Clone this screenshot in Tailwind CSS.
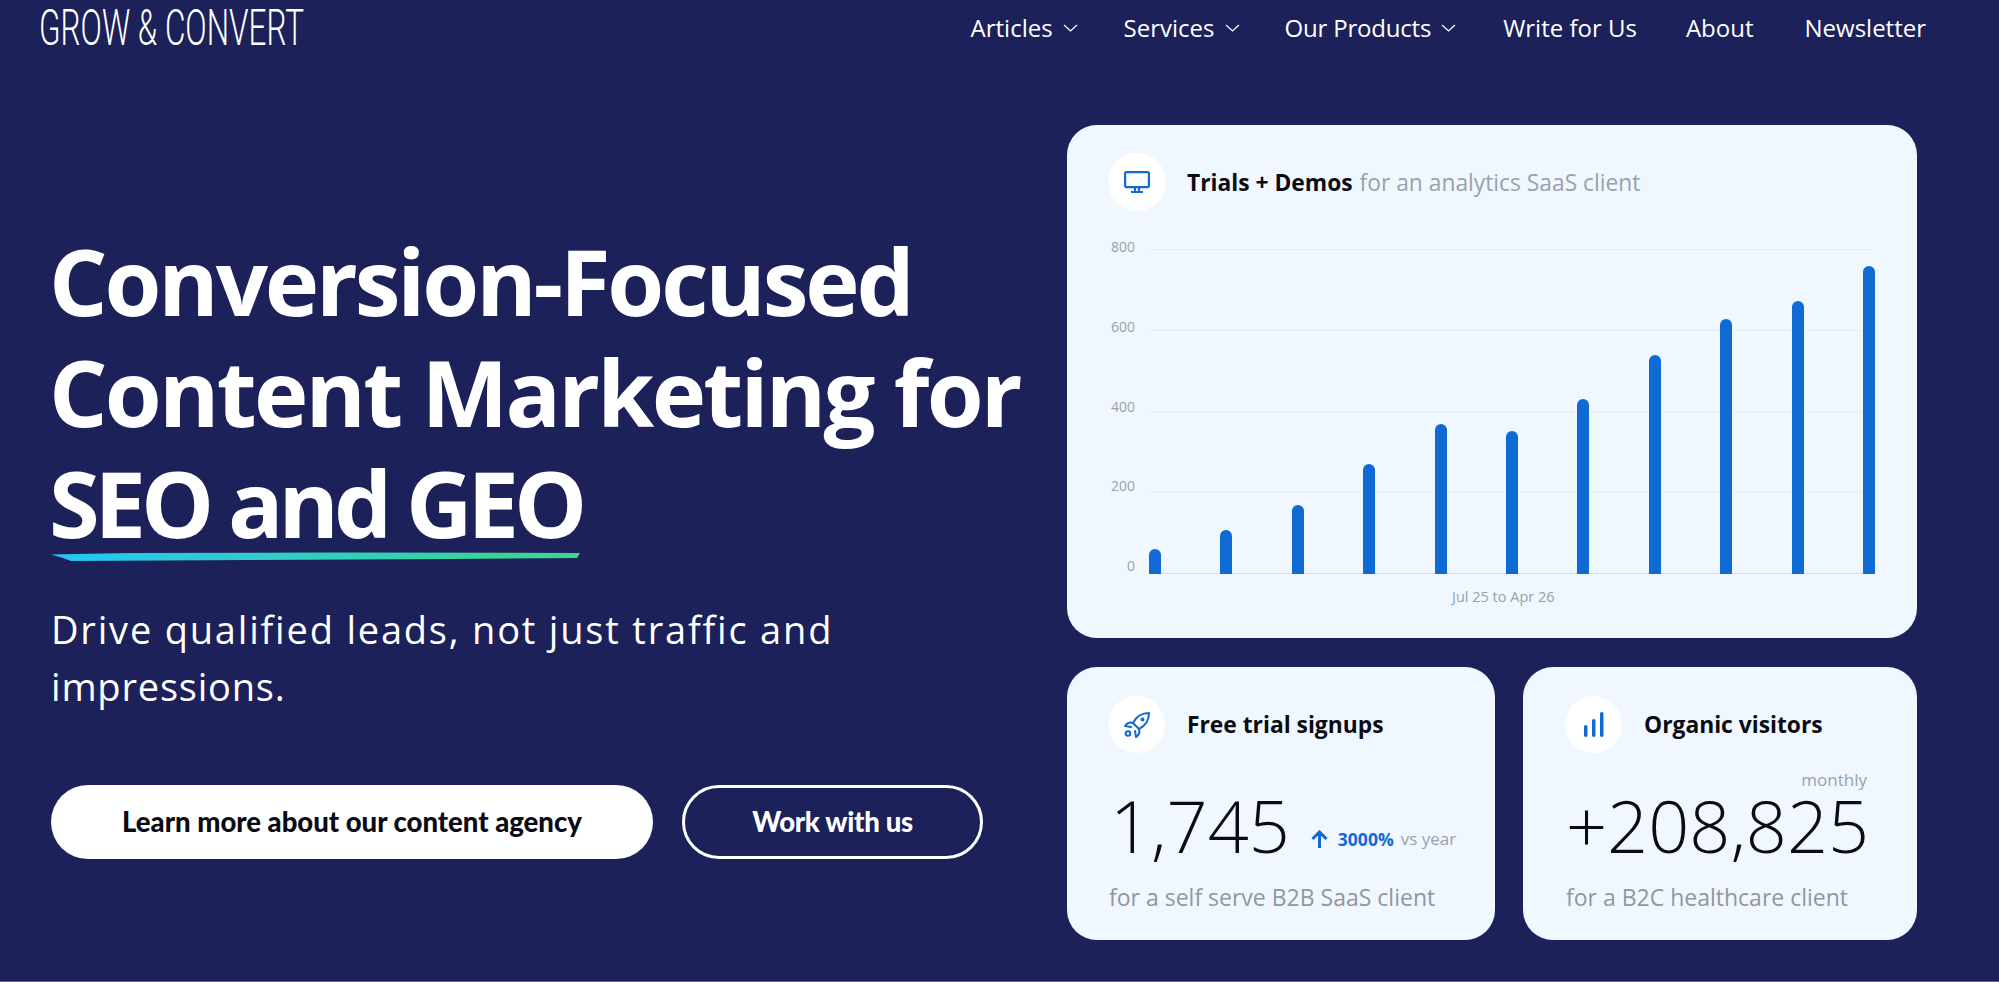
<!DOCTYPE html>
<html lang="en">
<head>
    <meta charset="UTF-8">
    <meta name="viewport" content="width=device-width, initial-scale=1.0">
    <title>Grow and Convert</title>
    <script src="https://cdn.jsdelivr.net/npm/@tailwindcss/browser@4"></script>
</head>
<body class="bg-[#1c2159] font-['Open_Sans',sans-serif] overflow-hidden">
    <div class="h-[982px] flex flex-col border-b border-[#5d6187]">
        <!-- Header -->
        <header class="h-[56px] flex items-center justify-between pl-[39px] pr-[73px] text-white">
            <a href="#" class="block w-[264px] font-['Roboto',sans-serif] font-light text-[50px] leading-none whitespace-nowrap origin-left scale-x-[0.63]">GROW &amp; CONVERT</a>
            <nav class="flex items-center text-[24px]">
                <a href="#" class="flex items-center gap-[10px] mr-[46px]">Articles
                    <svg class="w-[15px] h-[8px]" viewBox="0 0 15 8" fill="none" stroke="currentColor" stroke-width="1.2"><path d="M1 1l6.5 6 6.5-6"/></svg>
                </a>
                <a href="#" class="flex items-center gap-[10px] mr-[45px]">Services
                    <svg class="w-[15px] h-[8px]" viewBox="0 0 15 8" fill="none" stroke="currentColor" stroke-width="1.2"><path d="M1 1l6.5 6 6.5-6"/></svg>
                </a>
                <a href="#" class="flex items-center gap-[10px] mr-[47px] tracking-[-0.2px]">Our Products
                    <svg class="w-[15px] h-[8px]" viewBox="0 0 15 8" fill="none" stroke="currentColor" stroke-width="1.2"><path d="M1 1l6.5 6 6.5-6"/></svg>
                </a>
                <a href="#" class="mr-[49px]">Write for Us</a>
                <a href="#" class="mr-[51px]">About</a>
                <a href="#">Newsletter</a>
            </nav>
        </header>

        <main class="flex justify-between pl-[51px] pr-[82px] pt-[69px]">
            <!-- Hero copy -->
            <section class="w-[1000px] pt-[100px]">
                <h1 class="-ml-[2px] font-bold text-[92px] leading-[111px] tracking-[-0.03em] text-white">
                    <span class="tracking-[-0.034em]">Conversion-Focused</span><br>Content Marketing for<br>
                    <span class="relative inline-block tracking-[-0.055em]">SEO and GEO
                        <svg class="absolute left-[2px] top-[105px] w-[530px] h-[9px]" viewBox="0 0 530 9" preserveAspectRatio="none">
                            <defs>
                                <linearGradient id="brush" x1="0" x2="1" y1="0" y2="0">
                                    <stop offset="0" stop-color="#25c6f5"/>
                                    <stop offset="1" stop-color="#3ed68a"/>
                                </linearGradient>
                            </defs>
                            <path d="M0 2.5L80 1 280 0.5 529 1 526 6 400 7 200 8 20 9 12 6z" fill="url(#brush)"/>
                        </svg>
                    </span>
                </h1>
                <p class="mt-[43px] w-[800px] text-[38px] leading-[57px] tracking-[1.8px] text-white">Drive qualified leads, not just traffic and <span class="tracking-[0.8px]">impressions.</span></p>
                <div class="mt-[70px] flex gap-[29px] font-['Lato',sans-serif] font-black text-[27.5px]">
                    <a href="#" class="w-[602px] h-[74px] rounded-full bg-white text-[#0b0b14] flex items-center justify-center">Learn more about our content agency</a>
                    <a href="#" class="w-[301px] h-[74px] rounded-full border-[3px] border-white text-white tracking-[-0.3px] flex items-center justify-center">Work with us</a>
                </div>
            </section>

            <!-- Results -->
            <section class="w-[850px] flex flex-col gap-[29px]">
                <div class="h-[513px] rounded-[30px] bg-[#f0f7ff] pt-[28px] pl-[41px] pr-[41px]">
                    <div class="flex items-center gap-[21px]">
                        <div class="w-[58px] h-[58px] rounded-full bg-white flex items-center justify-center">
                            <svg class="w-[26px] h-[22px]" viewBox="0 0 26 22" fill="none" stroke="#0f6ad4" stroke-width="2.2"><rect x="1.1" y="1.1" width="23.8" height="15" rx="1.5"/><path d="M11 16v4M15 16v4M7 21h12"/></svg>
                        </div>
                        <p class="mt-[3px] text-[22.8px]"><span class="font-bold text-[#0b0b14]">Trials + Demos</span> <span class="ml-[1px] text-[#9aa1ad]">for an analytics SaaS client</span></p>
                    </div>
                    <!-- Chart -->
                    <div class="mt-[38px] flex">
                        <div class="w-[41px] h-[335px] flex flex-col justify-between text-[14px] leading-[20px] text-[#9aa1ad] -mt-[12px] pr-[14px] text-right">
                            <span>800</span><span>600</span><span>400</span><span>200</span><span class="-mb-[4px]">0</span>
                        </div>
                        <div class="relative w-[726px] h-[325px]">
                            <div class="absolute inset-0 flex flex-col justify-between">
                                <div class="h-px bg-[#e6edf5] w-[723px]"></div>
                                <div class="h-px bg-[#e6edf5] w-[723px]"></div>
                                <div class="h-px bg-[#e6edf5] w-[723px]"></div>
                                <div class="h-px bg-[#e6edf5] w-[723px]"></div>
                                <div class="h-px bg-[#d5dde9] w-[723px]"></div>
                            </div>
                            <div class="absolute inset-0 flex items-end justify-between">
                                <div class="w-[12px] h-[25px] rounded-t-full bg-[#0f6ad4]"></div>
                                <div class="w-[12px] h-[44px] rounded-t-full bg-[#0f6ad4]"></div>
                                <div class="w-[12px] h-[69px] rounded-t-full bg-[#0f6ad4]"></div>
                                <div class="w-[12px] h-[110px] rounded-t-full bg-[#0f6ad4]"></div>
                                <div class="w-[12px] h-[150px] rounded-t-full bg-[#0f6ad4]"></div>
                                <div class="w-[12px] h-[143px] rounded-t-full bg-[#0f6ad4]"></div>
                                <div class="w-[12px] h-[175px] rounded-t-full bg-[#0f6ad4]"></div>
                                <div class="w-[12px] h-[219px] rounded-t-full bg-[#0f6ad4]"></div>
                                <div class="w-[12px] h-[255px] rounded-t-full bg-[#0f6ad4]"></div>
                                <div class="w-[12px] h-[273px] rounded-t-full bg-[#0f6ad4]"></div>
                                <div class="w-[12px] h-[308px] rounded-t-full bg-[#0f6ad4]"></div>
                            </div>
                        </div>
                    </div>
                    <p class="mt-[13px] ml-[344px] text-[14.5px] leading-[20px] text-[#9aa1ad]">Jul 25 to Apr 26</p>
                </div>

                <div class="flex justify-between">
                    <div class="w-[428px] h-[273px] rounded-[30px] bg-[#f0f7ff] pt-[29px] pl-[41px]">
                        <div class="flex items-center gap-[22px]">
                            <div class="w-[57px] h-[57px] rounded-full bg-white flex items-center justify-center">
                                <svg class="w-[26px] h-[26px]" viewBox="0 0 26 26" fill="none" stroke="#0f6ad4" stroke-width="2" stroke-linejoin="round" stroke-linecap="round"><path d="M25 1C18 1 12 5 9 11l6 6c6-3 10-9 10-16z"/><path d="M9 11C6 10 3 11 1 14l6 1M15 17c1 3 0 6-3 8l-1-6"/><circle cx="18.5" cy="7.5" r="1"/><circle cx="4" cy="21.5" r="2.3"/></svg>
                            </div>
                            <p class="mt-[2px] text-[22.8px] font-bold text-[#0b0b14]">Free trial signups</p>
                        </div>
                        <div class="mt-[37px] flex">
                            <span class="ml-[2px] font-light text-[72px] leading-[70px] text-[#0b0b14]">1,745</span>
                            <div class="ml-[21px] self-end pb-[9px] flex items-center leading-[24px]">
                                <svg class="w-[17px] h-[18px]" viewBox="0 0 17 18" fill="none" stroke="#0f6ad4" stroke-width="3"><path d="M8.5 18V2M1.5 9l7-7 7 7"/></svg>
                                <span class="ml-[10px] font-bold text-[17.5px] text-[#0f6ad4]">3000%</span>
                                <span class="ml-[7px] text-[17px] text-[#9aa1ad]">vs year</span>
                            </div>
                        </div>
                        <p class="mt-[22px] ml-[1px] text-[23px] leading-[30px] text-[#8f97a3]">for a self serve B2B SaaS client</p>
                    </div>
                    <div class="w-[394px] h-[273px] rounded-[30px] bg-[#f0f7ff] pt-[29px] pl-[42px]">
                        <div class="flex items-center gap-[22px]">
                            <div class="w-[57px] h-[57px] rounded-full bg-white flex items-center justify-center">
                                <svg class="w-[20px] h-[25px]" viewBox="0 0 20 25" fill="#0f6ad4"><rect y="13" width="3.5" height="12" rx="1.7"/><rect x="8" y="7" width="3.5" height="18" rx="1.7"/><rect x="16" width="3.5" height="25" rx="1.7"/></svg>
                            </div>
                            <p class="mt-[2px] text-[22.8px] font-bold text-[#0b0b14]">Organic visitors</p>
                        </div>
                        <p class="mt-[17px] pr-[50px] text-right text-[17px] leading-[20px] text-[#9aa1ad]">monthly</p>
                        <p class="ml-[1px] font-light text-[72px] leading-[70px] text-[#0b0b14]">+208,825</p>
                        <p class="mt-[22px] ml-[1px] text-[23px] leading-[30px] text-[#8f97a3]">for a B2C healthcare client</p>
                    </div>
                </div>
            </section>
        </main>
    </div>
</body>
</html>
